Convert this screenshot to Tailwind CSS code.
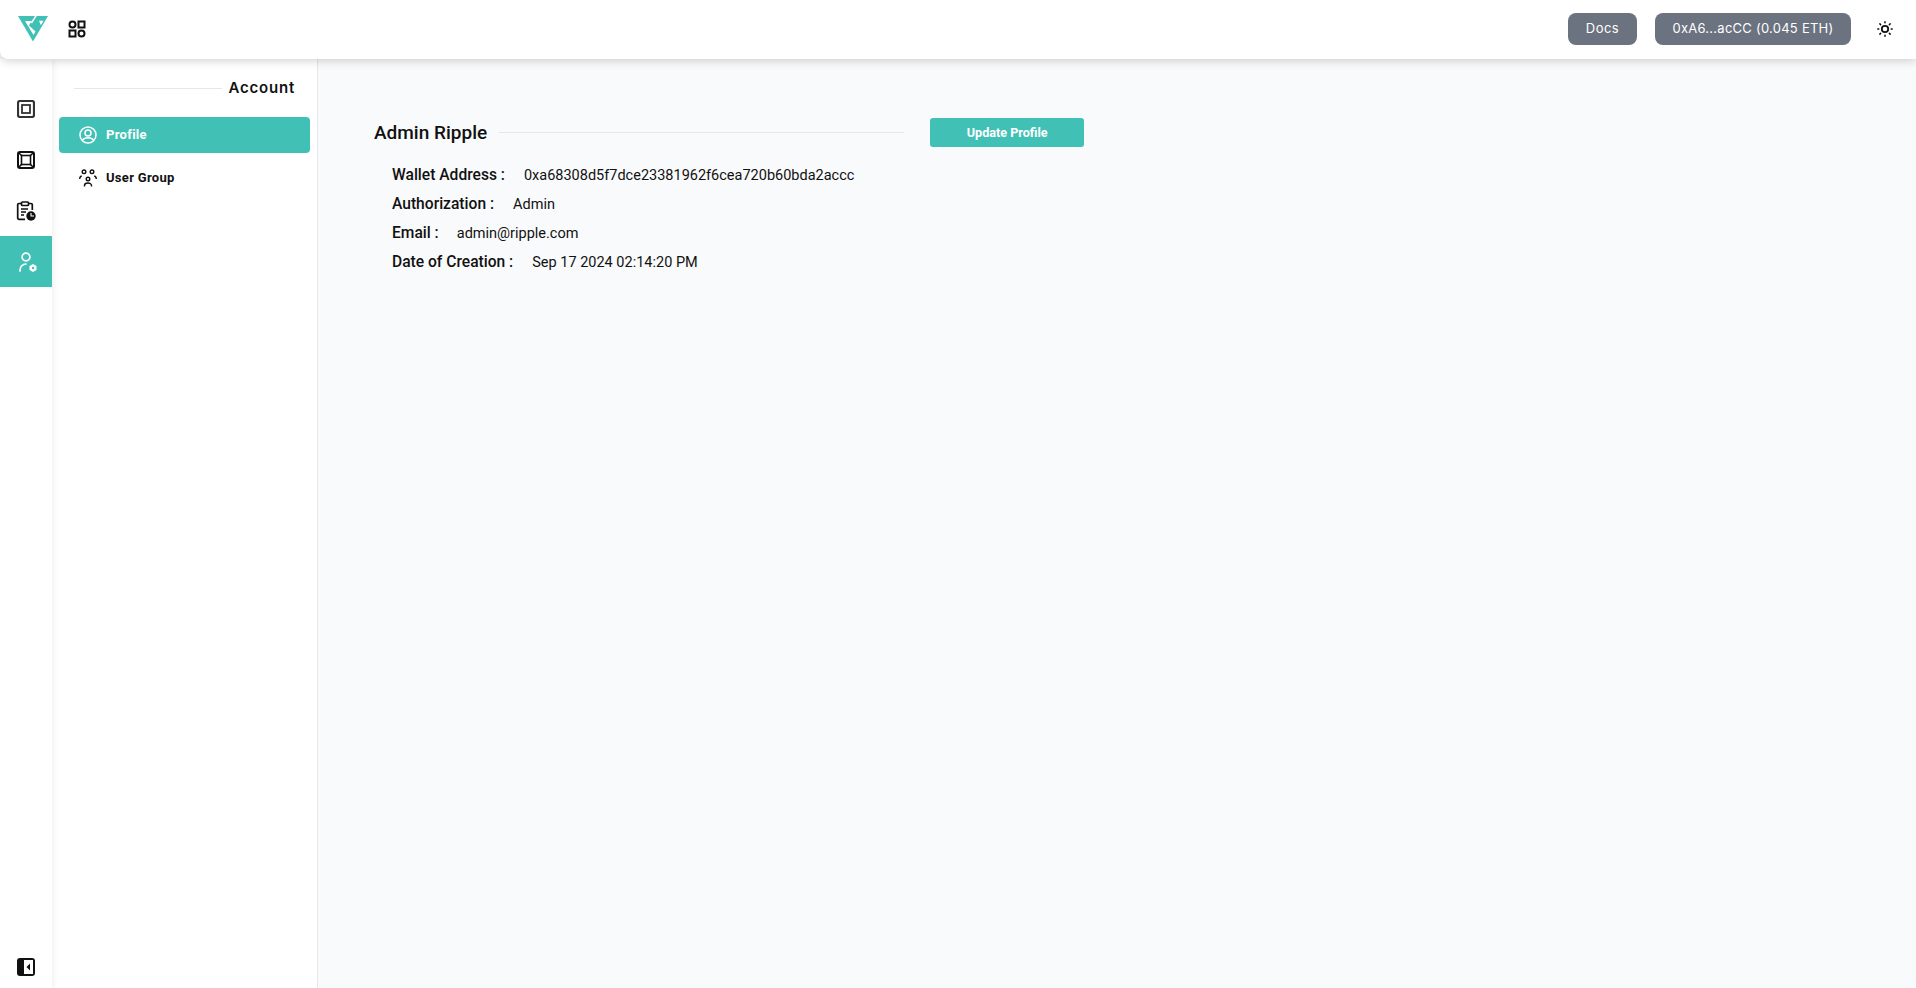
<!DOCTYPE html>
<html><head><meta charset="utf-8"><title>Profile</title>
<script src="https://cdn.jsdelivr.net/npm/@tailwindcss/browser@4"></script></head>
<body class="m-0 overflow-hidden">
<div class="w-[1916px] h-[988px] flex flex-col bg-[#f9fafb] font-['Roboto',sans-serif] text-[#111]">
  <header class="relative z-20 h-[59px] shrink-0 bg-white rounded-bl-lg shadow-[0_2px_10px_rgba(0,0,0,0.18)] flex items-center pl-[18px] pr-[23px] pb-[1px]">
    <svg class="w-[30px] h-[26px]" viewBox="0 0 30 26"><path d="M0 0H30L15 25.500Z" fill="#41c1b5"/><path d="M7 5H13.500L11 9.500L17.500 15.500L15.500 19Z M17 0H18.800L14 7.500L12.800 6.500Z M21 4.700H25.500L22.900 9.200Z" fill="#fff"/></svg>
    <svg class="ml-[20px] w-[18px] h-[18px]" viewBox="0 0 18 18" fill="none" stroke="#111" stroke-width="2"><circle cx="4.500" cy="4.500" r="3"/><rect x="10.500" y="1.500" width="6" height="6"/><rect x="1.500" y="10.500" width="6" height="6"/><circle cx="13.500" cy="13.500" r="3"/></svg>
    <div class="ml-auto flex items-center">
      <button class="w-[69px] h-[32px] rounded-lg bg-[#6b7280] text-white font-['Inter',sans-serif] text-[13px] tracking-[0.5px]">Docs</button>
      <button class="ml-[18px] w-[196px] h-[32px] rounded-lg bg-[#6b7280] text-white font-['Inter',sans-serif] text-[13px] tracking-[0.25px]">0xA6...acCC (0.045 ETH)</button>
      <svg class="ml-[26px] w-[16px] h-[16px]" viewBox="0 0 16 16" fill="none" stroke="#111"><circle cx="8" cy="8" r="3.200" stroke-width="1.800"/><path stroke-width="1.500" stroke-linecap="round" d="M8 .8v1M8 14.200v1M.8 8h1M14.200 8h1M2.900 2.900l.7.7M12.400 12.400l.7.7M2.900 13.100l.7-.7M12.400 3.600l.7-.7"/></svg>
    </div>
  </header>
  <div class="flex flex-1 min-h-0">
    <nav class="relative z-10 w-[52px] bg-white shadow-[2px_0_6px_rgba(0,0,0,0.06)] flex flex-col pt-[24px]">
      <div class="h-[51px] flex items-center justify-center">
        <svg class="w-[18px] h-[18px]" viewBox="0 0 18 18" fill="none" stroke="#333"><rect x="1" y="1" width="16" height="16" rx="2" stroke-width="2.200"/><rect x="5" y="5" width="8" height="8" stroke-width="1.800"/></svg>
      </div>
      <div class="h-[51px] flex items-center justify-center">
        <svg class="w-[18px] h-[18px]" viewBox="0 0 18 18" fill="none" stroke="#111" stroke-width="1.600"><rect x="1" y="1" width="16" height="16" rx="2" stroke-width="2"/><rect x="4.500" y="4.500" width="9" height="9"/><path d="M1.500 1.500L4.500 4.500M16.500 1.500L13.500 4.500M1.500 16.500L4.500 13.500M16.500 16.500L13.500 13.500"/></svg>
      </div>
      <div class="h-[51px] flex items-center justify-center">
        <svg class="w-[20px] h-[20px]" viewBox="0 0 20 20" fill="none" stroke="#111" stroke-width="1.700"><path d="M5 2.500H3a1.300 1.300 0 0 0-1.300 1.300V17a1.300 1.300 0 0 0 1.300 1.300h6M13 2.500h2a1.300 1.300 0 0 1 1.300 1.300V9"/><rect x="5.500" y="1" width="7" height="3.500" rx="1"/><path d="M5 8h7M5 11h5M5 14h3"/><circle cx="15" cy="15" r="4.700" fill="#111" stroke="none"/><path d="M15 12V15H18" stroke="#fff" stroke-width="1.100"/></svg>
      </div>
      <div class="h-[51px] bg-[#41c1b5] flex items-center justify-center">
        <svg class="w-[22px] h-[22px]" viewBox="0 0 22 22" fill="none" stroke="#fff" stroke-width="1.700"><circle cx="11" cy="6" r="3.900"/><path d="M5 20v-1a6 6 0 0 1 6-6" stroke-linecap="round"/><path d="M18 13L21.500 15V19L18 21L14.500 19V15Z" fill="#fff" stroke="none"/><circle cx="18" cy="17" r="1.200" fill="#41c1b5" stroke="none"/></svg>
      </div>
      <div class="mt-auto h-[33px] flex items-start justify-center pt-[2px]">
        <svg class="w-[18px] h-[20px]" viewBox="0 0 18 20"><rect x="0" y="1" width="18" height="18" rx="3" fill="#111"/><rect x="7" y="3" width="9" height="14" fill="#fff"/><path d="M13 6.500L9.500 10L13 13.500Z" fill="#111"/></svg>
      </div>
    </nav>
    <aside class="w-[266px] bg-white border-r border-[#e5e7eb] px-[7px] pt-[15px]">
      <div class="flex items-center pl-[15px] pr-[15px] h-[28px]">
        <div class="h-px w-[151px] bg-[#e5e7eb]"></div>
        <span class="ml-[6px] font-['Inter',sans-serif] font-semibold text-[15px] tracking-[0.8px]">Account</span>
      </div>
      <a class="mt-[15px] h-[36px] rounded bg-[#41c1b5] text-white flex items-center pl-[20px] w-[251px] font-bold text-[13px] tracking-[0.3px]">
        <svg class="w-[18px] h-[18px] mr-[9px]" viewBox="0 0 18 18" fill="none" stroke="#fff" stroke-width="1.500"><circle cx="9" cy="9" r="8"/><circle cx="9" cy="7" r="3"/><path d="M3.500 14c1-1.500 3-2.300 5.500-2.300s4.500.8 5.500 2.300"/></svg>
        Profile
      </a>
      <a class="mt-[7px] h-[36px] text-[#111] flex items-center pl-[20px] w-[251px] font-bold text-[13px] tracking-[0.3px]">
        <svg class="w-[18px] h-[18px] mr-[9px]" viewBox="0 0 18 18" fill="none" stroke="#111" stroke-width="1.400"><circle cx="5" cy="2.800" r="1.800"/><circle cx="13" cy="2.800" r="1.800"/><circle cx="9" cy="10" r="1.800"/><path d="M.8 10V9a2.500 2.500 0 0 1 2-2M17.200 10V9a2.500 2.500 0 0 0-2-2M5.500 17.500v-1a3.500 2.500 0 0 1 7 0v1"/></svg>
        User Group
      </a>
    </aside>
    <main class="flex-1 pl-[56px] pt-[59px]">
      <div class="flex items-center w-[720px] h-[29px]">
        <h1 class="font-medium text-[19px] leading-none">Admin Ripple</h1>
        <div class="ml-[12px] w-[405px] h-px bg-[#e5e7eb]"></div>
        <button class="ml-[26px] w-[154px] h-[29px] pt-[1px] rounded-[3px] bg-[#41c1b5] text-white font-bold text-[12.600px]">Update Profile</button>
      </div>
      <dl class="pl-[18px] mt-[14px] text-[14.500px] leading-[29px]">
        <div class="flex h-[29px]"><dt class="font-medium text-[15.600px]">Wallet Address :</dt><dd class="ml-[19px]">0xa68308d5f7dce23381962f6cea720b60bda2accc</dd></div>
        <div class="flex h-[29px]"><dt class="font-medium text-[15.600px]">Authorization :</dt><dd class="ml-[19px]">Admin</dd></div>
        <div class="flex h-[29px]"><dt class="font-medium text-[15.600px]">Email :</dt><dd class="ml-[18px]">admin@ripple.com</dd></div>
        <div class="flex h-[29px]"><dt class="font-medium text-[15.600px]">Date of Creation :</dt><dd class="ml-[19px]">Sep 17 2024 02:14:20 PM</dd></div>
      </dl>
    </main>
  </div>
</div>
</body></html>
